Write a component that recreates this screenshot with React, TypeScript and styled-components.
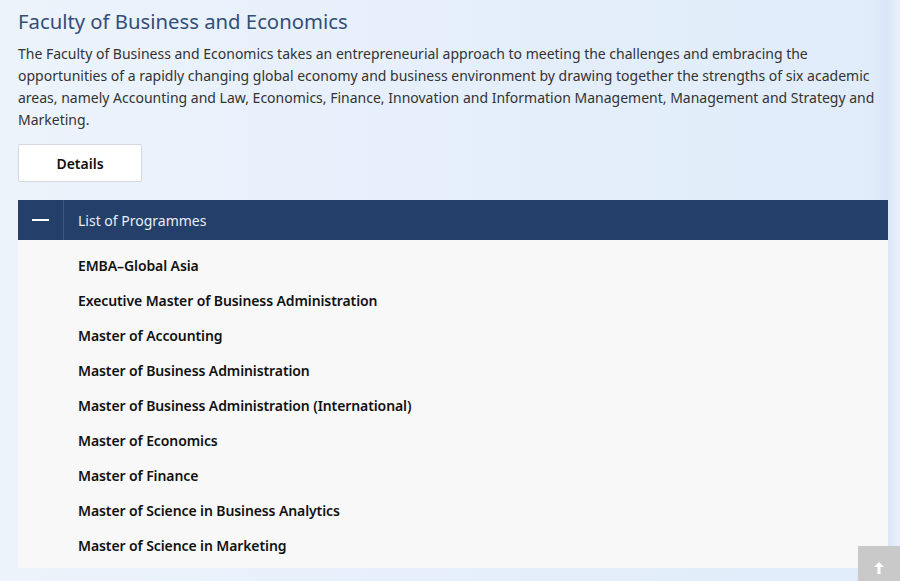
import React from "react";
import styled, { createGlobalStyle } from "styled-components";

const programmes = [
	"EMBA–Global Asia",
	"Executive Master of Business Administration",
	"Master of Accounting",
	"Master of Business Administration",
	"Master of Business Administration (International)",
	"Master of Economics",
	"Master of Finance",
	"Master of Science in Business Analytics",
	"Master of Science in Marketing",
];

const App: React.FC = () => {
	return (
		<>
			<GlobalStyle />
			<Page>
				<Title>Faculty of Business and Economics</Title>
				<Intro>
					The Faculty of Business and Economics takes an entrepreneurial approach to meeting the challenges and embracing the
					opportunities of a rapidly changing global economy and business environment by drawing together the strengths of six academic
					areas, namely Accounting and Law, Economics, Finance, Innovation and Information Management, Management and Strategy and
					Marketing.
				</Intro>
				<DetailsButton>Details</DetailsButton>
				<Accordion>
					<AccordionHeader>
						<ToggleCell aria-label="Collapse">
							<Minus />
						</ToggleCell>
						<HeaderLabel>List of Programmes</HeaderLabel>
					</AccordionHeader>
					<ProgrammeList>
						{programmes.map((p) => (
							<Programme key={p}>{p}</Programme>
						))}
					</ProgrammeList>
				</Accordion>
			</Page>
			<BackToTop aria-label="Back to top">
				<svg width="10" height="12" viewBox="0 0 10 12">
					<path d="M5 0 L10 5 H6.5 V12 H3.5 V5 H0 Z" fill="#fff" />
				</svg>
			</BackToTop>
		</>
	);
};

export default App;

const GlobalStyle = createGlobalStyle`
	html, body {
		margin: 0;
		padding: 0;
	}
	body {
		background: linear-gradient(90deg, #ecf3fb 0%, #e4eefb 60%, #e1ecfa 97%, #d9e5f6 98.6%, #e6effb 99.7%);
		font-family: "Noto Sans", "Liberation Sans", Arial, sans-serif;
		height: 581px;
		overflow: hidden;
	}
`;

const Page = styled.div`
	width: 870px;
	padding: 7px 12px 0 18px;
`;

const Title = styled.h1`
	margin: 0;
	font-size: 20.3px;
	font-weight: 400;
	line-height: 28px;
	color: #344e78;
`;

const Intro = styled.p`
	margin: 8px 0 0;
	font-size: 14px;
	line-height: 22px;
	color: #333;
`;

const DetailsButton = styled.button`
	display: block;
	margin-top: 13px;
	width: 124px;
	height: 38px;
	background: #fff;
	border: 1px solid #d4d8de;
	border-radius: 2px;
	font-family: inherit;
	font-size: 14px;
	font-weight: 600;
	color: #111;
	cursor: pointer;
`;

const Accordion = styled.section`
	margin-top: 18px;
	background: #f8f8f8;
`;

const AccordionHeader = styled.div`
	display: flex;
	align-items: center;
	height: 40px;
	background: #253f6b;
`;

const ToggleCell = styled.div`
	display: flex;
	align-items: center;
	justify-content: center;
	width: 45px;
	height: 100%;
	border-right: 1px solid #3c5684;
`;

const Minus = styled.span`
	width: 17px;
	height: 2px;
	background: #fff;
`;

const HeaderLabel = styled.span`
	margin-left: 14px;
	font-size: 14px;
	color: #e9eef6;
`;

const ProgrammeList = styled.ul`
	list-style: none;
	margin: 0;
	padding: 8px 0 5px 60px;
`;

const Programme = styled.li`
	height: 35px;
	line-height: 35px;
	font-size: 14px;
	font-weight: 600;
	letter-spacing: -0.1px;
	color: #111;
`;

const BackToTop = styled.button`
	position: fixed;
	right: 0;
	top: 546px;
	width: 42px;
	height: 40px;
	padding: 0;
	border: none;
	background: #c9c9c9;
	display: flex;
	align-items: flex-start;
	justify-content: center;
	padding-top: 16px;
	cursor: pointer;
`;
